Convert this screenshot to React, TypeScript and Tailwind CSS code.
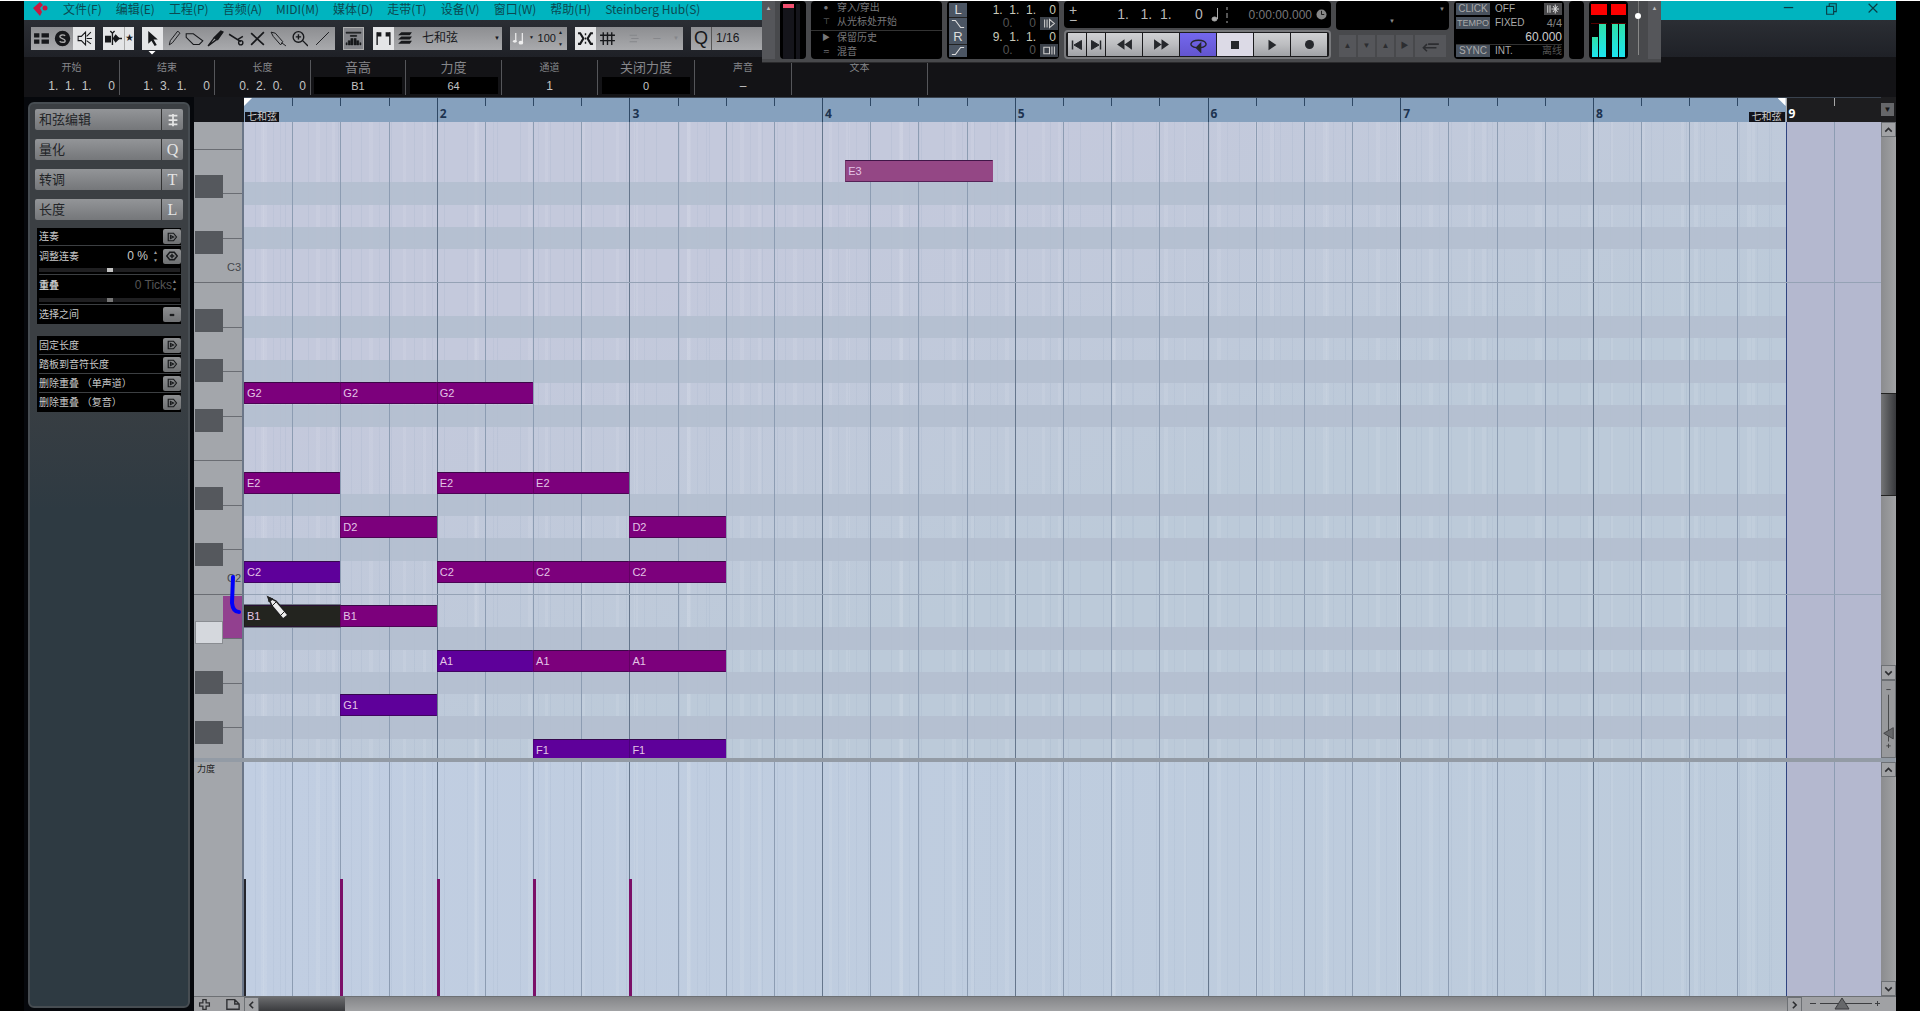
import type { ReactNode } from "react";
import { clsx } from "clsx";

const BARS = 8.495;
const FIRST_ROW = 38;
const ROW = 22.25;
const ROLL = 636;

const barX = (bar: number) => `${(bar / BARS) * 100}%`;
const rowY = (row: number) => `${((FIRST_ROW + row * ROW) / ROLL) * 100}%`;
const rollY = (y: number) => `${(y / ROLL) * 100}%`;

const menus = ["文件(F)", "编辑(E)", "工程(P)", "音频(A)", "MIDI(M)", "媒体(D)", "走带(T)", "设备(V)", "窗口(W)", "帮助(H)", "Steinberg Hub(S)"];

const infoCells = [
  { label: "开始", value: "1.  1.  1.     0", w: "w-24", position: true },
  { label: "结束", value: "1.  3.  1.     0", w: "w-[95px]", position: true },
  { label: "长度", value: "0.  2.  0.     0", w: "w-24", position: true },
  { label: "音高", value: "B1", w: "w-[95px]", box: true },
  { label: "力度", value: "64", w: "w-24", box: true },
  { label: "通道", value: "1", w: "w-24" },
  { label: "关闭力度", value: "0", w: "w-[97px]", box: true },
  { label: "声音", value: "–", w: "w-[97px]" },
  { label: "文本", value: "", w: "w-[136px]" },
];

type Note = { name: string; row: number; bar: number; len?: number; color: string };
const magenta = "bg-[#7c007c]";
const violet = "bg-[#5e009a]";

const notes: Note[] = [
  { name: "E3", row: 0, bar: 3.12, len: 0.765, color: "bg-[#944785]" },
  { name: "G2", row: 10, bar: 0, color: magenta },
  { name: "G2", row: 10, bar: 0.5, color: magenta },
  { name: "G2", row: 10, bar: 1, color: magenta },
  { name: "E2", row: 14, bar: 0, color: magenta },
  { name: "E2", row: 14, bar: 1, color: magenta },
  { name: "E2", row: 14, bar: 1.5, color: magenta },
  { name: "D2", row: 16, bar: 0.5, color: magenta },
  { name: "D2", row: 16, bar: 2, color: magenta },
  { name: "C2", row: 18, bar: 0, color: violet },
  { name: "C2", row: 18, bar: 1, color: magenta },
  { name: "C2", row: 18, bar: 1.5, color: magenta },
  { name: "C2", row: 18, bar: 2, color: magenta },
  { name: "B1", row: 20, bar: 0, color: "bg-[#23241f] outline outline-[#6d7683]" },
  { name: "B1", row: 20, bar: 0.5, color: magenta },
  { name: "A1", row: 22, bar: 1, color: violet },
  { name: "A1", row: 22, bar: 1.5, color: magenta },
  { name: "A1", row: 22, bar: 2, color: magenta },
  { name: "G1", row: 24, bar: 0.5, color: violet },
  { name: "F1", row: 26, bar: 1.5, color: violet },
  { name: "F1", row: 26, bar: 2, color: violet },
];

const sharpRows = [1, 3, 7, 9, 11, 15, 17, 21, 23, 25];
const blackKeys = [53, 109, 187, 237, 287, 365, 421, 499, 549, 599];
const quarters = Array.from({ length: 33 }, (_, i) => i + 1);

const cjk = "font-['Liberation_Sans','Noto_Sans_CJK_SC',sans-serif]";

function GridTexture() {
  return (
    <div className="absolute inset-0 bg-[repeating-linear-gradient(90deg,transparent_0_11px,#93a5bf2a_11px_12px,transparent_12px_19px,#ffffff14_19px_23px,transparent_23px_29px,#93a5bf22_29px_30px,transparent_30px_41px,#93a5bf2a_41px_42px,transparent_42px_53px),repeating-linear-gradient(90deg,transparent_0_17px,#ffffff14_17px_20px,transparent_20px_36px,#93a5bf22_36px_37px,transparent_37px_71px)]" />
  );
}

function BeatLines() {
  return (
    <>
      <div className="absolute inset-y-0 right-0 bg-[#b4b8cf]" style={{ left: barX(8) }} />
      {quarters.map((q) => (
        <div
          key={q}
          className={clsx("absolute inset-y-0 w-px", q === 32 ? "bg-[#304480]" : q % 4 === 0 ? "bg-[#65768c]" : "bg-[#8c9cb2]")}
          style={{ left: barX(q / 4) }}
        />
      ))}
    </>
  );
}

function Tool({ label, children, on, dark, w = "w-[21px]" }: { label: string; children: ReactNode; on?: boolean; dark?: boolean; w?: string }) {
  return (
    <button
      type="button"
      aria-label={label}
      className={clsx("flex h-full items-center justify-center text-[#17181b]", w, on ? "bg-[#e4e5e7]" : dark ? "bg-[#85868b]" : "")}
    >
      {children}
    </button>
  );
}

function Glyph({ children, size = 17 }: { children: ReactNode; size?: number }) {
  return (
    <svg width={size} height={size} viewBox="0 0 16 16" fill="none" stroke="currentColor" strokeWidth="1.3">
      {children}
    </svg>
  );
}

const group = "flex h-[23px] shrink-0 bg-linear-to-b from-[#8d8e91] to-[#a9aaad]";

function Toolbar() {
  return (
    <div className="flex h-[37px] shrink-0 items-center gap-2 overflow-hidden bg-linear-to-b from-[#2b2e34] to-[#1f2127] pb-px pl-[7px] text-[13px] text-[#17181b]">
      <div className={group}>
        <Tool label="Setup layout"><Glyph><path d="M1 3h5v4H1zM1 9h5v4H1zM8 3h7v4H8zM8 9h7v4H8z" fill="currentColor" stroke="none" /></Glyph></Tool>
        <Tool label="Solo editor">
          <Glyph><circle cx="8" cy="8" r="6.6" fill="currentColor" /><path d="M10.5 5.5C9 4 5.5 4.500 5.500 6.300S10.500 8 10.500 10 7 12 5.300 10.500" stroke="#aaa" /></Glyph>
        </Tool>
        <Tool label="Acoustic feedback" on w="w-[22px]">
          <Glyph><path d="M2 6h3l4-4v12L5 10H2zM10 6l4-4M10 8h5M10 10l4 3" strokeWidth="1" /></Glyph>
        </Tool>
      </div>
      <div className={group}>
        <Tool label="Auto-scroll" on><Glyph><path d="M0 6h5v5H0zM10 5l3 3-3 3-2-3z" fill="currentColor" /><path d="M7 2v12M5 1l2 2 2-2M11 8h5" /></Glyph></Tool>
        <Tool label="Auto-scroll options" on w="w-[10px] border-l border-[#aaa] text-[8px]">★</Tool>
      </div>
      <div className={clsx(group, "relative")}>
        <span className="absolute left-[6px] top-6 size-2 bg-white [clip-path:polygon(0_0,100%_0,50%_50%)]" />
        <Tool label="Select" on><Glyph><path d="M4 1v12l3-3 3 5 2-1-3-5h4z" fill="currentColor" stroke="none" /></Glyph></Tool>
        <Tool label="Draw"><Glyph><path d="M4 14l1-4 7-9 2 2-7 9z" strokeWidth="0.9" /></Glyph></Tool>
        <Tool label="Erase"><Glyph size={19}><path d="M1 4h6l8 6-3 3H7L1 7z" strokeWidth="0.9" /></Glyph></Tool>
        <Tool label="Trim"><Glyph><path d="M1 15l6-8 2 2z" /><path d="M7 7l6-6 2 1-5 7z" fill="currentColor" /></Glyph></Tool>
        <Tool label="Split"><Glyph><path d="M1 4l11 7M9 9l5-3" strokeWidth="1.5" /><circle cx="12" cy="12" r="2" /></Glyph></Tool>
        <Tool label="Mute"><Glyph><path d="M2 3l12 11M14 2L2 14" strokeWidth="1.6" /></Glyph></Tool>
        <Tool label="Glue"><Glyph><path d="M1 2l4 1 7 8-2 3-7-8zM11 12l4 3" strokeWidth="0.9" /></Glyph></Tool>
        <Tool label="Zoom"><Glyph><circle cx="7" cy="6.500" r="5" /><path d="M11 10l5 5M4.500 6.500h5M7 4v5" /></Glyph></Tool>
        <Tool label="Line" w="w-[25px]"><Glyph><path d="M2 14L14 2" strokeWidth="0.9" /></Glyph></Tool>
      </div>
      <div className={group}>
        <Tool label="Velocity" dark w="w-[21px] ring-1 ring-inset ring-[#b0b0b0]">
          <Glyph><path d="M1 2h14v1H1zM1 14v-2h1v2zM3 14v-4h2v4zM5.500 14V8h2v6zM8.500 14V8h2v6zM11 14v-4h2v4zM14 14v-2h1v2zM5 5h6v1H5z" fill="currentColor" strokeWidth="0.5" /></Glyph>
        </Tool>
      </div>
      <div className={clsx(group, "ml-px")}>
        <Tool label="Show part borders" on><Glyph><path d="M2 14V2M14 14V2" /><path d="M2 2h4v4H2zM10 2h4v4h-4z" fill="currentColor" stroke="none" /></Glyph></Tool>
        <Tool label="Edit active part only"><Glyph><path d="M5 2h10l-2 3H2zM5 6h10l-2 3H2zM5 10h10l-2 3H2z" fill="currentColor" stroke="none" /></Glyph></Tool>
        <select aria-label="Part" className="w-[87px] appearance-none bg-transparent pl-[7px] text-[12px]"><option>七和弦</option></select>
        <span className="-ml-2 self-center pr-[2px] text-[6px]">▼</span>
      </div>
      <div className={clsx(group, "w-[57px] items-center justify-between pl-[2px] pr-1")}>
        <Glyph size={15}><path d="M4 2v9M11 2v10" stroke="#eee" /><ellipse cx="3" cy="11" rx="2" ry="1.500" fill="#eee" stroke="none" /><ellipse cx="9.500" cy="12.500" rx="2.500" ry="2" fill="#eee" stroke="none" /></Glyph>
        <span className="text-[5px]">▼</span>
        <input aria-label="Insert velocity" defaultValue="100" className="w-5 bg-transparent text-right text-[11px]" />
        <span className="flex flex-col text-[5px] leading-3"><span>▲</span><span>▼</span></span>
      </div>
      <div className={group}>
        <Tool label="Snap" on><Glyph><path d="M1 3h2l3 5-3 5H1M15 3h-2l-3 5 3 5h2" strokeWidth="2" /><path d="M8 3v2M8 7v2M8 11v2" /></Glyph></Tool>
        <Tool label="Snap type" w="w-6"><Glyph><path d="M4 2v12M8 2v12M12 2v12M1 5h14M1 10h14" /></Glyph></Tool>
        <div className="flex w-[63px] items-center justify-between pl-2 pr-1 text-[#85868a]"><Glyph size={13}><path d="M2 4h9M4 8h9M2 12h9" /></Glyph><span>–</span><span className="text-[6px]">▼</span></div>
      </div>
      <div className={group}>
        <span className="flex w-[21px] items-center justify-center border-r border-[#555] text-lg">Q</span>
        <select aria-label="Quantize" className="w-[90px] appearance-none bg-transparent pl-1 text-xs"><option>1/16</option></select>
      </div>
    </div>
  );
}

const panel = "rounded-sm bg-black";

function Transport() {
  const btn = "flex h-[23px] items-center justify-center text-[#26282c]";
  const silver = "bg-linear-to-b from-[#d0d1d3] via-[#bcbdc0] to-[#a0a2a6]";
  return (
    <div className="absolute left-[762px] top-px flex h-[62px] gap-[5px] border-b border-[#2a2a2c] bg-[#48494c] pb-[3px] text-[#b8b8b8]">
      <div className="w-[13px] bg-[#55565a] pt-[3px] text-center text-[6px] leading-2 text-[#bbb]">▲</div>
      <div className={clsx(panel, "flex w-[26px] gap-[2px] px-[3px] pt-[3px]")}>
        <div className="h-full w-[11px] bg-[#15151b]"><div className="h-1 bg-[#f25070]" /></div>
        <div className="h-full w-1 bg-[#15151b]" />
      </div>
      <div className={clsx(panel, "flex w-[131px] flex-col text-[10px] text-[#77777a]")}>
        {[["●", "穿入/穿出"], ["⊤", "从光标处开始"], ["▶", "保留历史"], ["≂", "混音"]].map(([icon, text], i) => (
          <div key={text} className={clsx("flex flex-1 items-center leading-[14px]", i === 1 && "border-b border-[#333]")}>
            <span className="w-[26px] pl-1 text-center text-[8px]">{icon}</span>
            <span>{text}</span>
          </div>
        ))}
      </div>
      <div className={clsx(panel, "grid w-[112px] grid-cols-[18px_1fr] grid-rows-4 gap-x-1 p-[2px] text-right text-xs leading-[14px]")}>
        <span className="bg-[#4b5563] text-center text-[13px] text-[#ddd]">L</span>
        <span className="whitespace-pre pr-px text-[#c9c9b8]">1.  1.  1.    0</span>
        <span className="flex items-center justify-center border-t border-[#222] bg-[#4b5563] text-[#ddd]"><Glyph size={14}><path d="M1 4h4l6 8h4" /></Glyph></span>
        <span className="flex items-center justify-end gap-1 text-[#555]"><span className="whitespace-pre">0.     0</span><span className="-mr-px flex w-[18px] justify-center bg-[#3c424b] text-[#ccc]"><Glyph size={13}><path d="M2 3v10M5 3v10M8 3v10l6-5z" /></Glyph></span></span>
        <span className="bg-[#4b5563] text-center text-[13px] text-[#ddd]">R</span>
        <span className="whitespace-pre pr-px text-[#c9c9b8]">9.  1.  1.    0</span>
        <span className="flex items-center justify-center border-t border-[#222] bg-[#4b5563] text-[#ddd]"><Glyph size={14}><path d="M1 12h4l6-8h4" /></Glyph></span>
        <span className="flex items-center justify-end gap-1 text-[#555]"><span className="whitespace-pre">0.     0</span><span className="-mr-px flex w-[18px] justify-center bg-[#3c424b] text-[#ccc]"><Glyph size={13}><path d="M1 4h7v8H1zM11 3v10M14 3v10" /></Glyph></span></span>
      </div>
      <div className="flex w-[267px] flex-col">
        <div className={clsx(panel, "flex h-[29px] items-center pl-[5px] pr-1")}>
          <span className="flex flex-col text-sm leading-[10px]"><span>+</span><span>−</span></span>
          <span className="ml-10 whitespace-pre text-[14px]">1.   1.  1.      0</span>
          <svg className="ml-2" width="20" height="20" viewBox="0 0 20 20" fill="#aaa" stroke="#aaa"><ellipse cx="3.500" cy="14" rx="2.500" ry="2" /><path d="M6.500 14V3" /><path d="M16 2v3M16 8v5M16 16v2" /></svg>
          <span className="ml-auto text-[12px] text-[#77777a]">0:00:00.000</span>
          <svg className="ml-1" width="11" height="11" viewBox="0 0 12 12"><circle cx="6" cy="6" r="5.500" fill="#888" /><path d="M6 2v4h3" stroke="#111" fill="none" /></svg>
        </div>
        <div className="mt-[2px] flex gap-px rounded border-2 border-[#77787b] bg-[#1b1b1d] px-[2px] py-px">
          <button aria-label="Go to start" className={clsx(btn, silver, "w-[18px]")}><Glyph size={12}><path d="M2 2v12" strokeWidth="2" /><path d="M14 2v12L4 8z" fill="currentColor" /></Glyph></button>
          <button aria-label="Go to end" className={clsx(btn, silver, "w-[18px]")}><Glyph size={12}><path d="M14 2v12" strokeWidth="2" /><path d="M2 2v12l10-6z" fill="currentColor" /></Glyph></button>
          <button aria-label="Rewind" className={clsx(btn, silver, "flex-1")}><Glyph><path d="M8 3v10L1 8zM15 3v10L8 8z" fill="currentColor" stroke="none" /></Glyph></button>
          <button aria-label="Forward" className={clsx(btn, silver, "flex-1")}><Glyph><path d="M8 3v10l7-5zM1 3v10l7-5z" fill="currentColor" stroke="none" /></Glyph></button>
          <button aria-label="Cycle" className={clsx(btn, "flex-1 bg-linear-to-b from-[#7468ee] to-[#6355cf]")}><Glyph><path d="M6 11C-2 10 0 4 8 4s10 6 2 7" /><path d="M10 7v8l-4-4z" fill="currentColor" /></Glyph></button>
          <button aria-label="Stop" className={clsx(btn, "flex-1 bg-[#dcdae6]")}><span className="size-2 bg-[#26282c]" /></button>
          <button aria-label="Play" className={clsx(btn, silver, "flex-1")}><Glyph size={14}><path d="M4 2v12l9-6z" fill="currentColor" stroke="none" /></Glyph></button>
          <button aria-label="Record" className={clsx(btn, silver, "flex-1")}><span className="size-[9px] rounded-full bg-[#26282c]" /></button>
        </div>
      </div>
      <div className="flex w-[113px] flex-col">
        <div className={clsx(panel, "flex h-[29px] justify-end px-1 pt-1 text-[6px] text-[#888]")}><span className="mr-11 self-end pb-1">▼</span><span>▼</span></div>
        <div className="mx-[3px] mt-[5px] flex h-[22px] gap-[2px] text-[8px] text-[#2c2d30]">
          {["▲", "▼", "▲", "▶"].map((s, i) => (
            <button key={i} aria-label={`Marker ${i + 1}`} className="w-[17px] bg-[#55565a] leading-3">{s}</button>
          ))}
          <button aria-label="Back" className="flex flex-1 items-center justify-center bg-[#55565a]"><Glyph size={19}><path d="M6 6h9M2 9h11M5 6L2 9l3 3" /></Glyph></button>
        </div>
      </div>
      <div className={clsx(panel, "flex w-[110px] flex-col justify-between px-[2px] py-[2px] text-[10px] leading-3 text-[#aaa]")}>
        <div className="flex"><span className="mr-[5px] w-[34px] bg-[#48515d] text-center">CLICK</span>OFF<span className="ml-auto flex w-[18px] justify-center bg-[#4a4a4c] text-[#ddd]"><Glyph size={12}><path d="M1 3v10M4 3v10M11 2v12M6 8h10M8 4l6 8M14 4l-6 8" /></Glyph></span></div>
        <div className="flex"><span className="mr-[5px] w-[34px] bg-[#48515d] text-center text-[9px]">TEMPO</span>FIXED<span className="ml-auto text-[11px] leading-3 text-[#888]">4/4</span></div>
        <div className="text-right text-xs leading-[10px] text-[#ccc]">60.000</div>
        <div className="flex border-t border-[#333]"><span className="mr-[5px] w-[34px] bg-[#48515d] text-center">SYNC</span>INT.<span className="ml-auto text-[#555]">离线</span></div>
      </div>
      <div className={clsx(panel, "w-[15px]")} />
      <div className={clsx(panel, "flex w-[39px] gap-1 px-[2px] pb-[2px] pt-[3px]")}>
        {["h-5", "h-[33px]"].map((h) => (
          <div key={h} className="flex flex-1 flex-col">
            <div className="mb-2 h-3 bg-[#fd0000]" />
            <div className="flex flex-1 items-end gap-px border-t border-[#500] px-px">
              <div className={clsx("flex-1 bg-linear-to-t from-[#1de5f0] to-[#2fe0a8]", h)} />
              <div className="h-[33px] flex-1 bg-linear-to-t from-[#1de5f0] to-[#2fe0a8]" />
            </div>
          </div>
        ))}
      </div>
      <div className="flex w-[10px] flex-col items-center pb-1"><div className="h-3 w-px bg-[#777]" /><div className="size-[6px] rounded-full bg-white" /><div className="w-px flex-1 bg-[#888]" /></div>
      <div className="w-[13px] bg-[#55565a] pt-[3px] text-center text-[6px] leading-2 text-[#bbb]">▲</div>
    </div>
  );
}

function SmallButton({ label, kind = "play" }: { label: string; kind?: string }) {
  return (
    <button type="button" aria-label={label} className="flex h-[15px] w-[18px] shrink-0 items-center justify-center rounded-[2px] bg-linear-to-b from-[#8c8e90] to-[#6f7173] text-[#191b1d]">
      <Glyph size={12}>
        {kind === "dash" && <path d="M5 8h6" strokeWidth="3" />}
        {kind === "play" && <path d="M3 3h7l4 5-4 5H3zM6 6v4l4-2z" strokeWidth="1.600" />}
        {kind === "dot" && <path d="M5 3h6l4 5-4 5H5L1 8zM5 8h6M8 5v6" strokeWidth="2" />}
      </Glyph>
    </button>
  );
}

function Thumb({ dim }: { dim?: boolean }) {
  return <div className="mr-px flex h-1 items-center justify-center bg-[#1f1f21]"><span className={clsx("h-1 w-[6px]", dim ? "bg-[#777]" : "bg-[#c4c4c4]")} /></div>;
}

function Inspector() {
  const row = "flex items-center justify-between";
  const sections = [["和弦编辑", ""], ["量化", "Q"], ["转调", "T"], ["长度", "L"]];
  return (
    <aside className="w-[170px] shrink-0 bg-[#06080c] pb-[3px] pl-1 pr-1 pt-[5px]">
      <div className="h-full rounded-md border-2 border-[#474d52] bg-linear-to-b from-[#3b3f43] from-30% to-[#2e3a42] to-45% px-[5px] pt-[5px]">
        <div className="flex flex-col gap-[9px]">
          {sections.map(([name, key]) => (
            <button key={name} type="button" className="flex h-[21px] items-center rounded-[2px] bg-linear-to-b from-[#939598] to-[#75777a] text-[13px] text-[#222427]">
              <span className="flex-1 pl-1 text-left">{name}</span>
              <span className="flex h-full w-[22px] items-center justify-center border-l border-[#333] font-['Liberation_Serif',serif] text-base text-[#e4e4e4]">
                {key || <Glyph size={14}><path d="M3 3h10M3 8h10M3 13h10M8 1v14" strokeWidth="2" /></Glyph>}
              </span>
            </button>
          ))}
        </div>
        <div className="mx-[2px] mt-[8px] divide-y divide-[#3c3f42] bg-black pl-[2px] text-[10px] text-[#c8c8c8]">
          <div className={clsx(row, "h-[18px]")}>连奏<SmallButton label="连奏" /></div>
          <div className="h-[29px] pt-[2px]">
            <div className={row}><label htmlFor="legato" className="flex-1">调整连奏</label><input id="legato" defaultValue="0 %" className="w-8 bg-transparent text-right text-xs leading-4" /><span className="mx-[5px] flex flex-col text-[5px] leading-[8px] text-[#999]"><span>▲</span><span>▼</span></span><SmallButton label="重设" kind="dot" /></div>
            <div className="mt-[4px]"><Thumb /></div>
          </div>
          <div className="h-[30px] pt-[2px]">
            <div className={row}><label htmlFor="overlap" className="flex-1 font-bold">重叠</label><input id="overlap" defaultValue="0 Ticks" className="w-12 bg-transparent text-right text-xs leading-4 text-[#555]" /><span className="mr-1 flex flex-col text-[5px] leading-[8px] text-[#888]"><span>▲</span><span>▼</span></span></div>
            <div className="mt-[5px]"><Thumb dim /></div>
          </div>
          <div className={clsx(row, "h-[19px]")}>选择之间<SmallButton label="选择之间" kind="dash" /></div>
        </div>
        <div className="mx-[2px] mt-3 divide-y divide-[#3c3f42] bg-black pl-[2px] text-[10px] text-[#c8c8c8]">
          {["固定长度", "踏板到音符长度", "删除重叠 （单声道）", "删除重叠 （复音）"].map((t) => (
            <div key={t} className={clsx(row, "h-[19px] whitespace-nowrap")}>{t}<SmallButton label={t} /></div>
          ))}
        </div>
      </div>
    </aside>
  );
}

function Ruler() {
  return (
    <div className="flex h-[25px] shrink-0 bg-[#1d1d1f]">
      <div className="w-[50px] bg-[#15161a]" />
      <div className="relative flex-1 overflow-hidden border-t border-[#39424e]">
        <div className="absolute inset-y-0 left-0 bg-[#86a1be]" style={{ width: barX(8) }}>
          <span className="absolute left-0 top-0 size-2 bg-white [clip-path:polygon(0_0,100%_0,0_100%)]" />
          <span className="absolute right-0 top-0 size-2 bg-white [clip-path:polygon(0_0,100%_0,100%_100%)]" />
          <span className="absolute bottom-0 left-px bg-[#12131a] px-[2px] text-[10px] leading-[10px] text-[#ccc]">七和弦</span>
          <span className="absolute bottom-0 right-px bg-[#12131a] px-[3px] text-[10px] leading-[10px] text-[#ccc]">七和弦</span>
        </div>
        {quarters.map((q) => (
          <div key={q} className={clsx("absolute top-0 w-px", q % 4 ? "h-2" : "h-full", q >= 32 ? "bg-[#a8a8a8]" : "bg-[#2e4865]")} style={{ left: barX(q / 4) }}>
            {q % 4 === 0 && (
              <span className={clsx("absolute left-[3px] top-[9px] font-['Noto_Sans',sans-serif] text-xs font-bold leading-[14px]", q === 32 ? "text-white" : "text-[#1d3350]")}>{q / 4 + 1}</span>
            )}
          </div>
        ))}
      </div>
      <div className="w-[15px] pt-[6px]"><button aria-label="Ruler format" className="flex size-[13px] items-center justify-center bg-[#66676a] text-[8px] text-[#151515]">▼</button></div>
    </div>
  );
}

function Keyboard() {
  return (
    <div className="relative w-[50px] overflow-hidden border-r-2 border-[#6b7688] bg-[#a3a6ab]">
      {Array.from({ length: 14 }, (_, i) => i * 2 - 0.5).map((r) => (
        <div key={r} className={clsx("absolute right-0 h-px bg-[#6a6d73]", [-0.5, 5.5, 13.5, 19.5].includes(r) ? "left-0" : "left-7")} style={{ top: rowY(r) }} />
      ))}
      <div className="absolute left-[29px] right-0 h-[42px] bg-[#92408f]" style={{ top: rollY(474) }} />
      {blackKeys.map((y, i) => (
        <div key={y} className={clsx("absolute left-px h-[23px] w-[28px]", i === 7 ? "border border-[#8a8d92] bg-[#d5d8dd]" : "bg-[#55585d]")} style={{ top: rollY(y) }} />
      ))}
      <span className="absolute right-px text-[11px] leading-3 text-[#44474c]" style={{ top: rollY(139) }}>C3</span>
      <span className="absolute right-px text-[11px] leading-3 text-[#44474c]" style={{ top: rollY(450) }}>C2</span>
    </div>
  );
}

function Arrow({ dir, label }: { dir: "up" | "down" | "left" | "right"; label: string }) {
  const d = { up: "M4 10l4-4 4 4", down: "M4 6l4 4 4-4", left: "M10 4L6 8l4 4", right: "M6 4l4 4-4 4" }[dir];
  return (
    <button type="button" aria-label={label} className="flex size-[15px] shrink-0 items-center justify-center border border-[#6d7074] bg-[#a2a3a6] text-[#2c2d30]">
      <Glyph size={14}><path d={d} strokeWidth="2" /></Glyph>
    </button>
  );
}

function PianoRoll() {
  return (
    <div className="flex min-h-0 flex-[636]">
      <Keyboard />
      <div className="relative flex-1 overflow-hidden bg-linear-to-br from-[#c4c9dc] from-25% to-[#bccad9] to-60%">
        <GridTexture />
        {sharpRows.map((r) => (
          <div key={r} className="absolute inset-x-0 bg-[#b4bfcf]/90" style={{ top: rowY(r), height: `${(ROW / ROLL) * 100}%` }} />
        ))}
        <BeatLines />
        {[5.5, 19.5].map((r) => (
          <div key={r} className="absolute inset-x-0 h-px bg-[#95a2b5]" style={{ top: rowY(r) }} />
        ))}
        {notes.map((n) => (
          <div
            key={`${n.name}-${n.bar}`}
            className={clsx("absolute h-[22px] border border-b-[#2c0a3a]/60 border-l-black/20 border-r-transparent border-t-[#2c0a3a]/80 pl-[2px] text-[11px] leading-5 text-[#e3c4e6]", n.color)}
            style={{ left: barX(n.bar), width: barX(n.len ?? 0.5), top: rowY(n.row) }}
          >
            {n.name}
          </div>
        ))}
      </div>
      <div className="flex w-[15px] flex-col bg-[#98999c]">
        <Arrow dir="up" label="Scroll up" />
        <div className="flex-[257] bg-linear-to-r from-[#8b8c8f] to-[#a1a2a4]" />
        <div className="flex-[102] border-y border-[#222] bg-linear-to-r from-[#747577] to-[#38393c]" />
        <div className="flex-[170] bg-linear-to-r from-[#8b8c8f] to-[#a1a2a4]" />
        <Arrow dir="down" label="Scroll down" />
        <svg className="h-[78px] w-[15px] border border-[#6d7074]" viewBox="0 0 15 78" fill="none" stroke="#3c3d40">
          <path d="M5 5h5M7.500 11v54M5 70h5M7.500 67.500v5" /><path d="M13 49v13L2 55.500z" fill="#66676a" />
        </svg>
      </div>
    </div>
  );
}

function VelocityLane() {
  return (
    <div className="flex min-h-0 flex-[234]">
      <div className="w-[50px] border-r-2 border-[#6b7688] bg-[#a3a6ab] pl-[3px] pt-px text-[9px] leading-3 text-[#222]">力度</div>
      <div className="relative flex-1 overflow-hidden bg-linear-to-r from-[#c1cee2] to-[#bccbdb]">
        <GridTexture />
        <BeatLines />
        {[0, 0.5, 1, 1.5, 2].map((b) => (
          <div key={b} className={clsx("absolute bottom-0 h-1/2", b ? "w-[3px] bg-[#7b1068]" : "w-[2px] bg-[#24252c]")} style={{ left: barX(b) }} />
        ))}
      </div>
      <div className="flex w-[15px] flex-col bg-[#98999c]">
        <Arrow dir="up" label="Lane up" />
        <div className="flex-1 bg-linear-to-r from-[#8b8c8f] to-[#a1a2a4]" />
        <Arrow dir="down" label="Lane down" />
      </div>
    </div>
  );
}

export default function App() {
  return (
    <div className={clsx("relative flex h-screen flex-col overflow-hidden bg-black px-6", cjk)}>
      <div className="-mx-6 h-px shrink-0 bg-white" />
      <nav className="flex h-[19px] shrink-0 items-start bg-[#00b4bf] pl-[7px] text-[12px] text-[#0c4a52]">
        <svg width="18" height="16" viewBox="0 0 18 16" fill="#c9183f"><path d="M2 7l7-6 3 3-3 3 2 4-2 4z" /><circle cx="14" cy="7" r="2.500" /></svg>
        <div className="ml-[14px] flex gap-[14px]">
          {menus.map((m) => (
            <a key={m} href="#" className="whitespace-nowrap font-['Noto_Sans_CJK_SC',sans-serif] leading-[15px]">{m}</a>
          ))}
        </div>
        <div className="ml-auto flex items-center gap-7 pr-4 text-[#0a3d45]">
          <button aria-label="Minimize"><Glyph size={15}><path d="M3 7h10" /></Glyph></button>
          <button aria-label="Restore"><Glyph size={14}><path d="M3 5h8v9H3zM6 5V2h8v9h-3" /></Glyph></button>
          <button aria-label="Close"><Glyph size={14}><path d="M3 2l10 10M13 2L3 12" /></Glyph></button>
        </div>
      </nav>
      <Toolbar />
      <div className="flex h-10 shrink-0 items-stretch bg-[#131316] pb-[2px] pt-[3px]">
        {infoCells.map((c) => (
          <div key={c.label} className={clsx("flex shrink-0 flex-col items-center border-r border-[#55565a]", c.w)}>
            <span className={clsx("h-[17px] whitespace-nowrap leading-[15px] text-[#85868a]", c.box ? "text-[13px]" : "text-[10px]")}>{c.label}</span>
            <span
              className={clsx(
                "h-[17px] whitespace-pre leading-[18px] text-[#c4c4c4]",
                c.box ? "w-[88px] bg-black text-center text-[11px]" : "text-xs",
                c.position && "self-end pr-1",
              )}
            >
              {c.value}
            </span>
          </div>
        ))}
      </div>
      <div className="flex min-h-0 flex-1">
        <Inspector />
        <main className="relative flex min-w-0 flex-1 flex-col">
          <Ruler />
          <PianoRoll />
          <div className="h-1 shrink-0 bg-[#939ba5]" />
          <VelocityLane />
          <div className="flex h-[15px] shrink-0 border-t border-[#6d7074] bg-[#a0a1a4] text-[#303134]">
            <div className="flex w-[50px] items-center justify-between pl-1 pr-1">
              <Glyph size={13}><path d="M6 2h4v4h4v4h-4v4H6v-4H2V6h4z" strokeWidth="1.600" /></Glyph>
              <Glyph size={14}><path d="M1 3h9l5 5v6H1zM10 3v5h5" strokeWidth="1.600" /></Glyph>
            </div>
            <Arrow dir="left" label="Scroll left" />
            <div className="w-[86px] bg-linear-to-b from-[#6c6d6f] to-[#3a3b3e]" />
            <div className="flex-1 bg-linear-to-b from-[#858689] to-[#a1a2a4]" />
            <Arrow dir="right" label="Scroll right" />
            <svg className="ml-1 mr-[14px] w-[76px]" height="15" viewBox="0 0 76 15" fill="none" stroke="#3c3d40">
              <path d="M4 6.500h6M14 6.500h52M69 6.500h5M71.500 4v5" /><path d="M36 1l7 11H29z" fill="#66676a" />
            </svg>
          </div>
          <svg className="pointer-events-none absolute left-8 top-[477px]" width="70" height="60" viewBox="0 0 70 60" fill="none">
            <path d="M7 3L6 29Q7 38 13 38" stroke="#0000fa" strokeWidth="4" strokeLinecap="round" />
            <path d="M42 23l4 9 11 13 5-4-12-14z" fill="#ededed" stroke="#222" strokeWidth="1.500" />
            <path d="M42 23l1 5 4-3zM46 32l5-5M54 42l5-5" fill="#222" stroke="#222" />
          </svg>
        </main>
      </div>
      <Transport />
    </div>
  );
}
